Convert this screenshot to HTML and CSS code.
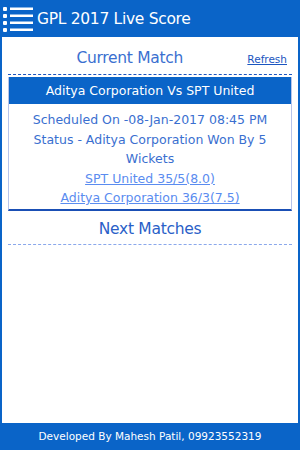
FILE: index.html
```html
<!DOCTYPE html>
<html lang="en">
<head>
    <meta charset="UTF-8">
    <title>GPL 2017 Live Score</title>
    <link rel="stylesheet" href="styles.css">
</head>
<body>
<div class="page">
    <div class="topbar">
        <svg class="menuicon" width="30" height="28" viewBox="0 0 30 28">
            <g fill="#ffffff">
                <rect x="0" y="3" width="4" height="4" rx="1"/>
                <rect x="0" y="10" width="4" height="4" rx="1"/>
                <rect x="0" y="17" width="4" height="4" rx="1"/>
                <rect x="0" y="24" width="4" height="4" rx="1"/>
                <rect x="7" y="3.5" width="23" height="2.5"/>
                <rect x="7" y="10.5" width="23" height="2.5"/>
                <rect x="7" y="17.5" width="23" height="2.5"/>
                <rect x="7" y="24.5" width="23" height="2.5"/>
            </g>
        </svg>
        <span class="apptitle">GPL 2017 Live Score</span>
    </div>

    <div class="content">
        <div class="sectionhead">
            <span class="sectiontitle">Current Match</span>
            <a href="#" class="refresh">Refresh</a>
        </div>

        <div class="matchcard">
            <div class="matchname">Aditya Corporation Vs SPT United</div>
            <div class="matchinfo">
                <p>Scheduled On -08-Jan-2017 08:45 PM</p>
                <p>Status - Aditya Corporation Won By 5 Wickets</p>
                <p><a href="#">SPT United 35/5(8.0)</a></p>
                <p><a href="#">Aditya Corporation 36/3(7.5)</a></p>
            </div>
        </div>

        <div class="sectionhead next">
            <span class="sectiontitle">Next Matches</span>
        </div>
    </div>

    <div class="bottombar">Developed By Mahesh Patil, 09923552319</div>
</div>
</body>
</html>
```

FILE: styles.css
```css
* {
    margin: 0;
    padding: 0;
    box-sizing: border-box;
}
body {
    width: 300px;
    height: 450px;
    background: #0a64c8;
    font-family: "DejaVu Sans", Verdana, sans-serif;
}
.page {
    display: flex;
    flex-direction: column;
    height: 450px;
}
.topbar {
    height: 37px;
    display: flex;
    align-items: center;
    padding-left: 3px;
    color: #ffffff;
}
.menuicon {
    margin-top: -2px;
}
.apptitle {
    margin-left: 4px;
    font-size: 15.5px;
    letter-spacing: -0.3px;
}
.content {
    flex: 1;
    background: #ffffff;
    margin: 0 2px;
    padding: 0 6px;
}
.sectionhead {
    display: flex;
    align-items: baseline;
    height: 38px;
    border-bottom: 1px dashed #1a55c0;
    padding-top: 12px;
}
.sectiontitle {
    flex: 1;
    text-align: center;
    padding-left: 16px;
    font-size: 15.5px;
    color: #3a6fd0;
    letter-spacing: -0.3px;
}
.refresh {
    margin-right: 5px;
    margin-left: 12px;
    font-size: 10.5px;
    color: #1a55c0;
}
.matchcard {
    margin-top: 2px;
    border: 1px solid #b7c4ea;
    border-top: none;
    border-bottom: 2px solid #1a4fb5;
}
.matchname {
    height: 27px;
    background: #0a64c8;
    color: #ffffff;
    font-size: 12.5px;
    text-align: center;
    line-height: 28px;
}
.matchinfo {
    padding: 6px 6px 1px;
    text-align: center;
    font-size: 12.5px;
    line-height: 19.6px;
    color: #3a6fd0;
}
.matchinfo a {
    color: #5a8cf0;
}
.sectionhead.next {
    height: 34px;
    padding-top: 9px;
    border-bottom: 1px dashed #8aa8ec;
}
.next .sectiontitle {
    padding-left: 0;
    color: #2a5fc8;
}
.bottombar {
    height: 27px;
    line-height: 27px;
    text-align: center;
    color: #ffffff;
    font-size: 10.5px;
}
```
